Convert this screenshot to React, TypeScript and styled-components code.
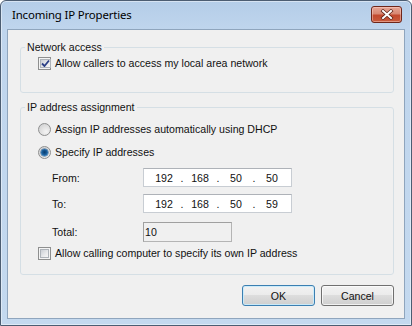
import React from "react";
import styled, { createGlobalStyle } from "styled-components";

const Global = createGlobalStyle`
  html, body { margin: 0; padding: 0; background: #ffffff; }
  * { box-sizing: border-box; }
`;

const Window = styled.div`
  width: 412px;
  height: 326px;
  border: 1px solid #4c5d72;
  border-radius: 6px 6px 0 0;
  background: linear-gradient(to bottom, #b4cde8 0px, #bfd5ed 28px, #c4d9ef 100%);
  box-shadow: inset 0 0 0 1px rgba(255, 255, 255, 0.45);
  display: flex;
  flex-direction: column;
  overflow: hidden;
`;

const TitleBar = styled.div`
  height: 28px;
  flex: none;
  display: flex;
  align-items: center;
  justify-content: space-between;
  padding: 0 9px 0 11px;
`;

const Title = styled.div`
  font-family: "Noto Sans", sans-serif;
  font-size: 11.4px;
  color: #000;
  letter-spacing: -0.15px;
  margin-top: -2px;
`;

const CloseButton = styled.div`
  width: 31px;
  height: 17px;
  margin-top: -1px;
  border: 1px solid #6e2619;
  border-radius: 3px;
  background: linear-gradient(to bottom, #e6a595 0%, #d88873 45%, #c3492e 55%, #c85c3e 100%);
  box-shadow: inset 0 0 0 1px rgba(255, 220, 210, 0.45);
  display: flex;
  align-items: center;
  justify-content: center;
`;

const Client = styled.div`
  flex: 1;
  margin: 0 6px 6px 6px;
  border: 1px solid #8fa5bd;
  background: #f0f0f0;
  padding: 11px 10px 0 12px;
  display: flex;
  flex-direction: column;
  font-family: "Liberation Sans", Arial, sans-serif;
  font-size: 10.6px;
  color: #111;
`;

const Group = styled.fieldset<{ $gap?: number }>`
  margin: ${(p) => p.$gap ?? 0}px 0 0 0;
  padding: 0;
  border: 1px solid #d5dfe5;
  border-radius: 3px;
  min-width: 0;
`;

const Legend = styled.legend`
  margin-left: 4px;
  padding: 0 2px;
  line-height: 13px;
  height: 13px;
`;

const GroupBody = styled.div<{ $pt: number; $pb: number }>`
  padding: ${(p) => p.$pt}px 0 ${(p) => p.$pb}px 17px;
  display: flex;
  flex-direction: column;
`;

const OptionRow = styled.div<{ $mt?: number; $h?: number }>`
  display: flex;
  align-items: center;
  gap: 4px;
  height: ${(p) => p.$h ?? 13}px;
  margin-top: ${(p) => p.$mt ?? 0}px;
  line-height: 13px;
`;

const FieldRow = styled.div<{ $mt: number; $h: number }>`
  display: flex;
  align-items: center;
  height: ${(p) => p.$h}px;
  margin-top: ${(p) => p.$mt}px;
  padding-left: 14px;
`;

const FieldLabel = styled.div`
  width: 91px;
`;

const CheckBox = styled.div`
  width: 13px;
  height: 13px;
  flex: none;
  border: 1px solid #8e8f8f;
  background: #f4f4f4;
  padding: 1px;
  display: flex;
`;

const CheckInner = styled.div`
  flex: 1;
  border: 1px solid #aeb3b9;
  background: linear-gradient(135deg, #cbcfd5 0%, #e9eaec 60%, #f6f6f6 100%);
  display: flex;
  align-items: center;
  justify-content: center;
`;

const Radio = styled.div`
  width: 13px;
  height: 13px;
  flex: none;
  border-radius: 50%;
  border: 1px solid #8e8f8f;
  background: radial-gradient(circle at 65% 70%, #f4f4f4 0%, #dcdcdc 60%, #c9cbcf 100%);
  display: flex;
  align-items: center;
  justify-content: center;
`;

const RadioDot = styled.div`
  width: 7px;
  height: 7px;
  border-radius: 50%;
  background: radial-gradient(circle at 50% 45%, #083b6b 0%, #1a5d9a 45%, #4a9ad8 100%);
  box-shadow: 0 0 0 0.5px #2a5b8a;
`;

const IpBox = styled.div`
  width: 149px;
  height: 19px;
  border: 1px solid #c8cdd3;
  border-top-color: #aeb2b8;
  background: #fff;
  display: flex;
  align-items: center;
  padding-left: 6px;
`;

const Octet = styled.span`
  width: 28px;
  text-align: center;
`;

const Dot = styled.span`
  width: 8px;
  text-align: center;
`;

const TotalBox = styled.div`
  width: 89px;
  height: 20px;
  border: 1px solid #b4b4b4;
  border-top-color: #a0a0a0;
  border-left-color: #a0a0a0;
  background: #f0f0f0;
  display: flex;
  align-items: center;
  padding-left: 1px;
`;

const ButtonBar = styled.div`
  display: flex;
  justify-content: flex-end;
  gap: 6px;
  margin-top: 10px;
`;

const Button = styled.div<{ $default?: boolean }>`
  width: 73px;
  height: 21px;
  border: 1px solid ${(p) => (p.$default ? "#3c7fb1" : "#707070")};
  border-radius: 3px;
  background: linear-gradient(to bottom, #f2f2f2 0%, #ebebeb 50%, #dddddd 50%, #cfcfcf 100%);
  box-shadow: inset 0 0 0 1px ${(p) => (p.$default ? "rgba(200,235,252,0.9)" : "rgba(255,255,255,0.7)")};
  display: flex;
  align-items: center;
  justify-content: center;
`;

const CheckMark = () => (
  <svg width="9" height="9" viewBox="0 0 9 9">
    <path d="M1 4.5 L3.5 7 L8 1.5" fill="none" stroke="#2b3f86" strokeWidth="1.8" strokeLinejoin="round" />
  </svg>
);

const CloseX = () => (
  <svg width="14" height="11" viewBox="0 0 14 11">
    <path d="M3 2 L11 9 M11 2 L3 9" stroke="#5a2015" strokeWidth="3.4" strokeLinecap="square" />
    <path d="M3 2 L11 9 M11 2 L3 9" stroke="#ffffff" strokeWidth="2" strokeLinecap="square" />
  </svg>
);

const Ip = ({ parts }: { parts: string[] }) => (
  <IpBox>
    {parts.map((p, i) => (
      <React.Fragment key={i}>
        {i > 0 && <Dot>.</Dot>}
        <Octet>{p}</Octet>
      </React.Fragment>
    ))}
  </IpBox>
);

export default function App() {
  return (
    <>
      <Global />
      <Window>
        <TitleBar>
          <Title>Incoming IP Properties</Title>
          <CloseButton>
            <CloseX />
          </CloseButton>
        </TitleBar>
        <Client>
          <Group>
            <Legend>Network access</Legend>
            <GroupBody $pt={3} $pb={22}>
              <OptionRow>
                <CheckBox>
                  <CheckInner>
                    <CheckMark />
                  </CheckInner>
                </CheckBox>
                <span>Allow callers to access my local area network</span>
              </OptionRow>
            </GroupBody>
          </Group>
          <Group $gap={8}>
            <Legend>IP address assignment</Legend>
            <GroupBody $pt={8} $pb={14}>
              <OptionRow $h={14}>
                <Radio />
                <span>Assign IP addresses automatically using DHCP</span>
              </OptionRow>
              <OptionRow $h={14} $mt={9}>
                <Radio>
                  <RadioDot />
                </Radio>
                <span>Specify IP addresses</span>
              </OptionRow>
              <FieldRow $mt={9} $h={19}>
                <FieldLabel>From:</FieldLabel>
                <Ip parts={["192", "168", "50", "50"]} />
              </FieldRow>
              <FieldRow $mt={7} $h={19}>
                <FieldLabel>To:</FieldLabel>
                <Ip parts={["192", "168", "50", "59"]} />
              </FieldRow>
              <FieldRow $mt={9} $h={20}>
                <FieldLabel>Total:</FieldLabel>
                <TotalBox>10</TotalBox>
              </FieldRow>
              <OptionRow $mt={5}>
                <CheckBox>
                  <CheckInner />
                </CheckBox>
                <span>Allow calling computer to specify its own IP address</span>
              </OptionRow>
            </GroupBody>
          </Group>
          <ButtonBar>
            <Button $default>OK</Button>
            <Button>Cancel</Button>
          </ButtonBar>
        </Client>
      </Window>
    </>
  );
}
